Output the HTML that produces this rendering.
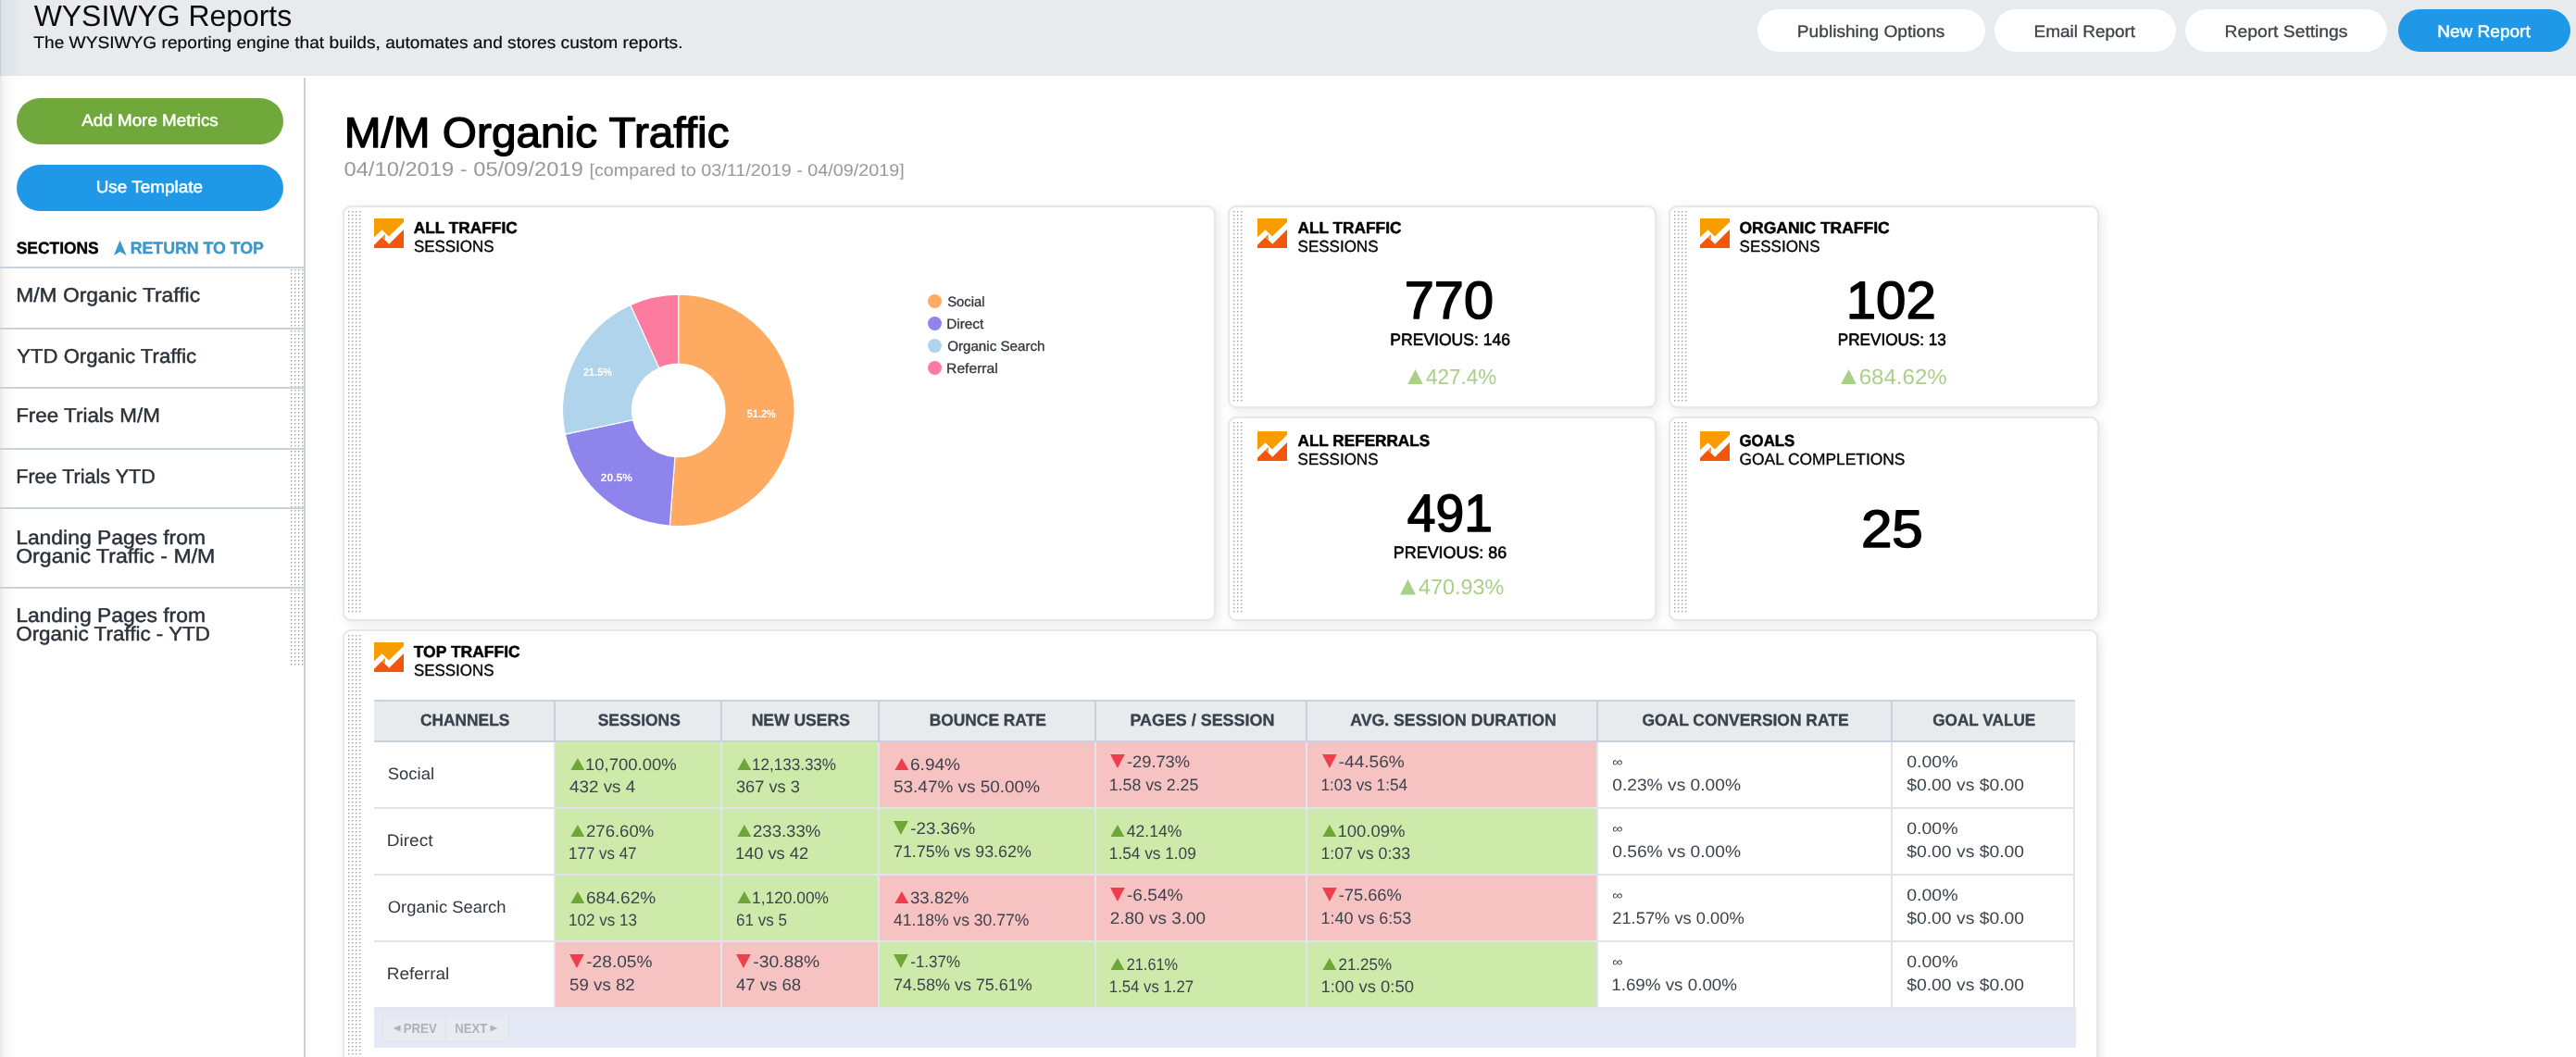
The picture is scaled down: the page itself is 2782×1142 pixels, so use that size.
<!DOCTYPE html>
<html><head><meta charset="utf-8"><title>WYSIWYG Reports</title>
<style>
html,body{margin:0;padding:0;background:#fff;}
body{width:2782px;height:1142px;overflow:hidden;position:relative;font-family:"Liberation Sans",sans-serif;}
#pg{position:absolute;left:0;top:0;width:2782px;height:1142px;overflow:hidden;}
#pg div,#pg svg{position:absolute;box-sizing:border-box;}
#tx{will-change:transform;}
#tx text{font-family:"Liberation Sans",sans-serif;white-space:pre;text-rendering:geometricPrecision;}
.card{background:#fff;border:2px solid #e7e7e8;border-radius:9px;box-shadow:3px 3px 11px rgba(0,0,0,0.09);}
.dots{background-image:radial-gradient(circle at 0.8px 0.8px,#a4a4a4 0.42px,rgba(164,164,164,0) 1.05px);background-size:4px 4px;}
</style></head><body><div id="pg">
<div style="left:0px;top:0px;width:2782px;height:82px;background:#e7ebee;"></div>
<div style="left:0px;top:0px;width:26px;height:82px;background:linear-gradient(90deg,rgba(20,25,30,0.15) 0,rgba(20,25,30,0.14) 1px,rgba(60,90,150,0.06) 1.6px,rgba(60,90,150,0.03) 10px,rgba(60,90,150,0) 26px);"></div>
<div style="left:0px;top:82px;width:16px;height:1060px;background:linear-gradient(90deg,rgba(0,0,0,0.085) 0,rgba(0,0,0,0.03) 5px,rgba(0,0,0,0) 16px);"></div>
<div style="left:1898px;top:10px;width:246px;height:46px;background:#fff;border-radius:23.0px;"></div>
<div style="left:2154px;top:10px;width:196px;height:46px;background:#fff;border-radius:23.0px;"></div>
<div style="left:2360px;top:10px;width:218px;height:46px;background:#fff;border-radius:23.0px;"></div>
<div style="left:2590px;top:10px;width:186px;height:46px;background:#2098e8;border-radius:23.0px;"></div>
<div style="left:328px;top:84px;width:2px;height:1058px;background:#c9d2dc;"></div>
<div style="left:18px;top:106px;width:288px;height:50px;background:#71a83b;border-radius:25.0px;"></div>
<div style="left:18px;top:178px;width:288px;height:50px;background:#2098e8;border-radius:25.0px;"></div>
<svg style="left:120px;top:256px" width="20" height="24" viewBox="0 0 20 24"><polygon points="9.5,3.7 16.6,20.1 9.7,16.1 2.9,20" fill="#3c97ca"/></svg>
<div style="left:0px;top:288px;width:328px;height:2px;background:#c9d2dc;"></div>
<div style="left:0px;top:354px;width:328px;height:2px;background:#c9d2dc;"></div>
<div style="left:0px;top:417.5px;width:328px;height:2px;background:#c9d2dc;"></div>
<div style="left:0px;top:484px;width:328px;height:2px;background:#c9d2dc;"></div>
<div style="left:0px;top:548px;width:328px;height:2px;background:#c9d2dc;"></div>
<div style="left:0px;top:634px;width:328px;height:2px;background:#c9d2dc;"></div>
<div class="dots" style="left:314px;top:291px;width:14px;height:63px;"></div>
<div class="dots" style="left:314px;top:357px;width:14px;height:60.5px;"></div>
<div class="dots" style="left:314px;top:420.5px;width:14px;height:63.5px;"></div>
<div class="dots" style="left:314px;top:487px;width:14px;height:61px;"></div>
<div class="dots" style="left:314px;top:551px;width:14px;height:83px;"></div>
<div class="dots" style="left:314px;top:637px;width:14px;height:84px;"></div>
<div class="card" style="left:370px;top:222px;width:943px;height:449px;"></div>
<div class="dots" style="left:376px;top:228px;width:15px;height:436px;"></div>
<div class="card" style="left:1326px;top:222px;width:463px;height:219px;"></div>
<div class="dots" style="left:1332px;top:228px;width:11px;height:206px;"></div>
<div class="card" style="left:1802px;top:222px;width:465px;height:219px;"></div>
<div class="dots" style="left:1808px;top:228px;width:15px;height:206px;"></div>
<div class="card" style="left:1326px;top:450px;width:463px;height:221px;"></div>
<div class="dots" style="left:1332px;top:456px;width:11px;height:208px;"></div>
<div class="card" style="left:1802px;top:450px;width:465px;height:221px;"></div>
<div class="dots" style="left:1808px;top:456px;width:15px;height:208px;"></div>
<div class="card" style="left:370px;top:680px;width:1896px;height:480px;border-bottom:none;border-bottom-left-radius:0;border-bottom-right-radius:0;"></div>
<div class="dots" style="left:376px;top:686px;width:15px;height:474px;"></div>
<svg style="left:404px;top:236px" width="32" height="32" viewBox="0 0 32 32"><polygon points="0,0 32,0 32,3.9 15.8,19.5 8.6,12.2 0,20.3" fill="#f89c00"/><polygon points="8.7,20.1 11.9,16.9 11.9,23.1" fill="#f59200"/><polygon points="0,28.7 8.6,20.2 16.2,27.7 32,12 32,32 0,32" fill="#f3560d"/></svg>
<svg style="left:1358px;top:236px" width="32" height="32" viewBox="0 0 32 32"><polygon points="0,0 32,0 32,3.9 15.8,19.5 8.6,12.2 0,20.3" fill="#f89c00"/><polygon points="8.7,20.1 11.9,16.9 11.9,23.1" fill="#f59200"/><polygon points="0,28.7 8.6,20.2 16.2,27.7 32,12 32,32 0,32" fill="#f3560d"/></svg>
<svg style="left:1836px;top:236px" width="32" height="32" viewBox="0 0 32 32"><polygon points="0,0 32,0 32,3.9 15.8,19.5 8.6,12.2 0,20.3" fill="#f89c00"/><polygon points="8.7,20.1 11.9,16.9 11.9,23.1" fill="#f59200"/><polygon points="0,28.7 8.6,20.2 16.2,27.7 32,12 32,32 0,32" fill="#f3560d"/></svg>
<svg style="left:1358px;top:466px" width="32" height="32" viewBox="0 0 32 32"><polygon points="0,0 32,0 32,3.9 15.8,19.5 8.6,12.2 0,20.3" fill="#f89c00"/><polygon points="8.7,20.1 11.9,16.9 11.9,23.1" fill="#f59200"/><polygon points="0,28.7 8.6,20.2 16.2,27.7 32,12 32,32 0,32" fill="#f3560d"/></svg>
<svg style="left:1836px;top:466px" width="32" height="32" viewBox="0 0 32 32"><polygon points="0,0 32,0 32,3.9 15.8,19.5 8.6,12.2 0,20.3" fill="#f89c00"/><polygon points="8.7,20.1 11.9,16.9 11.9,23.1" fill="#f59200"/><polygon points="0,28.7 8.6,20.2 16.2,27.7 32,12 32,32 0,32" fill="#f3560d"/></svg>
<svg style="left:404px;top:694px" width="32" height="32" viewBox="0 0 32 32"><polygon points="0,0 32,0 32,3.9 15.8,19.5 8.6,12.2 0,20.3" fill="#f89c00"/><polygon points="8.7,20.1 11.9,16.9 11.9,23.1" fill="#f59200"/><polygon points="0,28.7 8.6,20.2 16.2,27.7 32,12 32,32 0,32" fill="#f3560d"/></svg>
<svg style="left:0;top:0" width="2782" height="700" viewBox="0 0 2782 700"><path d="M732.75,318.30 A125.1,125.1 0 1 1 723.33,568.14 L728.96,493.56 A50.3,50.3 0 1 0 732.75,393.10 Z" fill="#ffaa61" stroke="#fff" stroke-width="1.1" stroke-linejoin="round"/><path d="M723.33,568.14 A125.1,125.1 0 0 1 610.33,469.15 L683.53,453.75 A50.3,50.3 0 0 0 728.96,493.56 Z" fill="#8e84eb" stroke="#fff" stroke-width="1.1" stroke-linejoin="round"/><path d="M610.33,469.15 A125.1,125.1 0 0 1 680.91,329.55 L711.91,397.62 A50.3,50.3 0 0 0 683.53,453.75 Z" fill="#b0d4eb" stroke="#fff" stroke-width="1.1" stroke-linejoin="round"/><path d="M680.91,329.55 A125.1,125.1 0 0 1 732.75,318.30 L732.75,393.10 A50.3,50.3 0 0 0 711.91,397.62 Z" fill="#fd7b9e" stroke="#fff" stroke-width="1.1" stroke-linejoin="round"/><circle cx="1009.5" cy="325.5" r="7.5" fill="#ffaa61"/><circle cx="1009.5" cy="349.5" r="7.5" fill="#8e84eb"/><circle cx="1009.5" cy="373.6" r="7.5" fill="#b0d4eb"/><circle cx="1009.5" cy="397.5" r="7.5" fill="#fd7b9e"/></svg>
<svg style="left:1520px;top:398.7px" width="17" height="16.5" viewBox="0 0 17 16.5"><polygon points="0,16.5 8.5,0 17,16.5" fill="#a9d087"/></svg>
<svg style="left:1988.25px;top:398.7px" width="17" height="16.5" viewBox="0 0 17 16.5"><polygon points="0,16.5 8.5,0 17,16.5" fill="#a9d087"/></svg>
<svg style="left:1512px;top:626.2px" width="17" height="16.5" viewBox="0 0 17 16.5"><polygon points="0,16.5 8.5,0 17,16.5" fill="#a9d087"/></svg>
<div style="left:404px;top:756px;width:1836.5px;height:45.5px;background:#e7ebee;border-top:2px solid #c9d2dc;border-bottom:2.5px solid #c9d2dc;"></div>
<div style="left:598px;top:757px;width:2px;height:44px;background:#c9d2dc;"></div>
<div style="left:778px;top:757px;width:2px;height:44px;background:#c9d2dc;"></div>
<div style="left:948px;top:757px;width:2px;height:44px;background:#c9d2dc;"></div>
<div style="left:1182px;top:757px;width:2px;height:44px;background:#c9d2dc;"></div>
<div style="left:1410px;top:757px;width:2px;height:44px;background:#c9d2dc;"></div>
<div style="left:1724px;top:757px;width:2px;height:44px;background:#c9d2dc;"></div>
<div style="left:2042px;top:757px;width:2px;height:44px;background:#c9d2dc;"></div>
<div style="left:600px;top:802px;width:178px;height:70px;background:#cdeaaa;"></div>
<svg style="left:615.5px;top:818.6px" width="15.8" height="13.8" viewBox="0 0 15.8 13.8"><polygon points="0,13.8 7.9,0 15.8,13.8" fill="#6ea637"/></svg>
<div style="left:780px;top:802px;width:168px;height:70px;background:#cdeaaa;"></div>
<svg style="left:795.5px;top:818.6px" width="15.8" height="13.8" viewBox="0 0 15.8 13.8"><polygon points="0,13.8 7.9,0 15.8,13.8" fill="#6ea637"/></svg>
<div style="left:950px;top:802px;width:232px;height:70px;background:#f6c2c2;"></div>
<svg style="left:965.5px;top:818.6px" width="15.8" height="13.8" viewBox="0 0 15.8 13.8"><polygon points="0,13.8 7.9,0 15.8,13.8" fill="#ee3f4c"/></svg>
<div style="left:1184px;top:802px;width:226px;height:70px;background:#f6c2c2;"></div>
<svg style="left:1199.05px;top:815px" width="15.8" height="15" viewBox="0 0 15.8 15"><polygon points="0,0 15.8,0 7.9,15" fill="#ee3f4c"/></svg>
<div style="left:1412px;top:802px;width:312px;height:70px;background:#f6c2c2;"></div>
<svg style="left:1427.8px;top:815px" width="15.8" height="15" viewBox="0 0 15.8 15"><polygon points="0,0 15.8,0 7.9,15" fill="#ee3f4c"/></svg>
<div style="left:404px;top:872px;width:1836.5px;height:2px;background:#e1e4e8;"></div>
<div style="left:600px;top:874px;width:178px;height:70px;background:#cdeaaa;"></div>
<svg style="left:615.5px;top:890.6px" width="15.8" height="13.8" viewBox="0 0 15.8 13.8"><polygon points="0,13.8 7.9,0 15.8,13.8" fill="#6ea637"/></svg>
<div style="left:780px;top:874px;width:168px;height:70px;background:#cdeaaa;"></div>
<svg style="left:795.5px;top:890.6px" width="15.8" height="13.8" viewBox="0 0 15.8 13.8"><polygon points="0,13.8 7.9,0 15.8,13.8" fill="#6ea637"/></svg>
<div style="left:950px;top:874px;width:232px;height:70px;background:#cdeaaa;"></div>
<svg style="left:965.3px;top:887px" width="15.8" height="15" viewBox="0 0 15.8 15"><polygon points="0,0 15.8,0 7.9,15" fill="#6ea637"/></svg>
<div style="left:1184px;top:874px;width:226px;height:70px;background:#cdeaaa;"></div>
<svg style="left:1199.25px;top:890.6px" width="15.8" height="13.8" viewBox="0 0 15.8 13.8"><polygon points="0,13.8 7.9,0 15.8,13.8" fill="#6ea637"/></svg>
<div style="left:1412px;top:874px;width:312px;height:70px;background:#cdeaaa;"></div>
<svg style="left:1428.0px;top:890.6px" width="15.8" height="13.8" viewBox="0 0 15.8 13.8"><polygon points="0,13.8 7.9,0 15.8,13.8" fill="#6ea637"/></svg>
<div style="left:404px;top:944px;width:1836.5px;height:2px;background:#e1e4e8;"></div>
<div style="left:600px;top:946px;width:178px;height:70px;background:#cdeaaa;"></div>
<svg style="left:615.5px;top:962.6px" width="15.8" height="13.8" viewBox="0 0 15.8 13.8"><polygon points="0,13.8 7.9,0 15.8,13.8" fill="#6ea637"/></svg>
<div style="left:780px;top:946px;width:168px;height:70px;background:#cdeaaa;"></div>
<svg style="left:795.5px;top:962.6px" width="15.8" height="13.8" viewBox="0 0 15.8 13.8"><polygon points="0,13.8 7.9,0 15.8,13.8" fill="#6ea637"/></svg>
<div style="left:950px;top:946px;width:232px;height:70px;background:#f6c2c2;"></div>
<svg style="left:965.5px;top:962.6px" width="15.8" height="13.8" viewBox="0 0 15.8 13.8"><polygon points="0,13.8 7.9,0 15.8,13.8" fill="#ee3f4c"/></svg>
<div style="left:1184px;top:946px;width:226px;height:70px;background:#f6c2c2;"></div>
<svg style="left:1199.05px;top:959px" width="15.8" height="15" viewBox="0 0 15.8 15"><polygon points="0,0 15.8,0 7.9,15" fill="#ee3f4c"/></svg>
<div style="left:1412px;top:946px;width:312px;height:70px;background:#f6c2c2;"></div>
<svg style="left:1427.8px;top:959px" width="15.8" height="15" viewBox="0 0 15.8 15"><polygon points="0,0 15.8,0 7.9,15" fill="#ee3f4c"/></svg>
<div style="left:404px;top:1016px;width:1836.5px;height:2px;background:#e1e4e8;"></div>
<div style="left:600px;top:1018px;width:178px;height:70px;background:#f6c2c2;"></div>
<svg style="left:615.3px;top:1031px" width="15.8" height="15" viewBox="0 0 15.8 15"><polygon points="0,0 15.8,0 7.9,15" fill="#ee3f4c"/></svg>
<div style="left:780px;top:1018px;width:168px;height:70px;background:#f6c2c2;"></div>
<svg style="left:795.3px;top:1031px" width="15.8" height="15" viewBox="0 0 15.8 15"><polygon points="0,0 15.8,0 7.9,15" fill="#ee3f4c"/></svg>
<div style="left:950px;top:1018px;width:232px;height:70px;background:#cdeaaa;"></div>
<svg style="left:965.3px;top:1031px" width="15.8" height="15" viewBox="0 0 15.8 15"><polygon points="0,0 15.8,0 7.9,15" fill="#6ea637"/></svg>
<div style="left:1184px;top:1018px;width:226px;height:70px;background:#cdeaaa;"></div>
<svg style="left:1199.25px;top:1034.6000000000001px" width="15.8" height="13.8" viewBox="0 0 15.8 13.8"><polygon points="0,13.8 7.9,0 15.8,13.8" fill="#6ea637"/></svg>
<div style="left:1412px;top:1018px;width:312px;height:70px;background:#cdeaaa;"></div>
<svg style="left:1428.0px;top:1034.6000000000001px" width="15.8" height="13.8" viewBox="0 0 15.8 13.8"><polygon points="0,13.8 7.9,0 15.8,13.8" fill="#6ea637"/></svg>
<div style="left:598px;top:801.5px;width:2px;height:286.5px;background:#e1e4e8;"></div>
<div style="left:778px;top:801.5px;width:2px;height:286.5px;background:#e1e4e8;"></div>
<div style="left:948px;top:801.5px;width:2px;height:286.5px;background:#e1e4e8;"></div>
<div style="left:1182px;top:801.5px;width:2px;height:286.5px;background:#e1e4e8;"></div>
<div style="left:1410px;top:801.5px;width:2px;height:286.5px;background:#e1e4e8;"></div>
<div style="left:1724px;top:801.5px;width:2px;height:286.5px;background:#e1e4e8;"></div>
<div style="left:2042px;top:801.5px;width:2px;height:286.5px;background:#e1e4e8;"></div>
<div style="left:2238.75px;top:801.5px;width:1.75px;height:286.5px;background:#e1e4e8;"></div>
<div style="left:404px;top:1088px;width:1837.5px;height:44px;background:#e5e9f5;border-top:2px solid #e3e5e9;"></div>
<div style="left:412.5px;top:1096.75px;width:137px;height:28.75px;background:#e8ebf2;border:1px dotted #d6dae2;"></div>
<div style="left:480.5px;top:1097.5px;width:1px;height:27px;border-left:1px dotted #d6dae2;"></div>
<svg style="left:424px;top:1106px" width="9" height="10" viewBox="0 0 9 10"><polygon points="8.5,1.5 8.5,8.5 0.8,5" fill="#b0b1b4"/></svg>
<svg style="left:529px;top:1106px" width="9" height="10" viewBox="0 0 9 10"><polygon points="0.5,1.5 0.5,8.5 8.2,5" fill="#b0b1b4"/></svg>
<svg id="tx" style="left:0;top:0" width="2782" height="1142" viewBox="0 0 2782 1142">
<text transform="translate(36.70 27.80) scale(0.9976 1)" font-size="32" fill="#0b0b0b">WYSIWYG Reports</text>
<text transform="translate(36.30 51.90) scale(1.0635 1)" font-size="18" fill="#0b0b0b" stroke="#0b0b0b" stroke-width="0.2" stroke-linejoin="round">The WYSIWYG reporting engine that builds, automates and stores custom reports.</text>
<text transform="translate(1940.84 40.00) scale(1.0628 1)" font-size="18" fill="#3b4349" stroke="#3b4349" stroke-width="0.3" stroke-linejoin="round">Publishing Options</text>
<text transform="translate(2196.60 40.00) scale(1.0526 1)" font-size="18" fill="#3b4349" stroke="#3b4349" stroke-width="0.3" stroke-linejoin="round">Email Report</text>
<text transform="translate(2402.58 40.00) scale(1.0710 1)" font-size="18" fill="#3b4349" stroke="#3b4349" stroke-width="0.3" stroke-linejoin="round">Report Settings</text>
<text transform="translate(2632.19 40.00) scale(1.0581 1)" font-size="18" fill="#fff" stroke="#fff" stroke-width="0.5" stroke-linejoin="round">New Report</text>
<text transform="translate(88.25 135.75) scale(1.0458 1)" font-size="18" fill="#fff" stroke="#fff" stroke-width="0.5" stroke-linejoin="round">Add More Metrics</text>
<text transform="translate(103.70 208.25) scale(1.0501 1)" font-size="18" fill="#fff" stroke="#fff" stroke-width="0.5" stroke-linejoin="round">Use Template</text>
<text transform="translate(17.70 273.70) scale(0.9673 1)" font-size="18" fill="#000" font-weight="700" stroke="#000" stroke-width="0.4" stroke-linejoin="round">SECTIONS</text>
<text transform="translate(140.72 273.80) scale(0.9752 1)" font-size="18.2" fill="#3c97ca" font-weight="700" stroke="#3c97ca" stroke-width="0.4" stroke-linejoin="round">RETURN TO TOP</text>
<text transform="translate(17.16 326.25) scale(1.0629 1)" font-size="21.5" fill="#2a3138" stroke="#2a3138" stroke-width="0.45" stroke-linejoin="round">M/M Organic Traffic</text>
<text transform="translate(18.23 392.00) scale(1.0293 1)" font-size="21.5" fill="#2a3138" stroke="#2a3138" stroke-width="0.45" stroke-linejoin="round">YTD Organic Traffic</text>
<text transform="translate(17.18 456.25) scale(1.0423 1)" font-size="21.5" fill="#2a3138" stroke="#2a3138" stroke-width="0.45" stroke-linejoin="round">Free Trials M/M</text>
<text transform="translate(17.22 522.00) scale(1.0028 1)" font-size="21.5" fill="#2a3138" stroke="#2a3138" stroke-width="0.45" stroke-linejoin="round">Free Trials YTD</text>
<text transform="translate(17.16 588.00) scale(1.0645 1)" font-size="21.5" fill="#2a3138" stroke="#2a3138" stroke-width="0.45" stroke-linejoin="round">Landing Pages from</text>
<text transform="translate(17.15 608.00) scale(1.0743 1)" font-size="21.5" fill="#2a3138" stroke="#2a3138" stroke-width="0.45" stroke-linejoin="round">Organic Traffic - M/M</text>
<text transform="translate(17.16 672.00) scale(1.0645 1)" font-size="21.5" fill="#2a3138" stroke="#2a3138" stroke-width="0.45" stroke-linejoin="round">Landing Pages from</text>
<text transform="translate(17.18 692.00) scale(1.0433 1)" font-size="21.5" fill="#2a3138" stroke="#2a3138" stroke-width="0.45" stroke-linejoin="round">Organic Traffic - YTD</text>
<text transform="translate(371.74 159.30) scale(1.0383 1)" font-size="46" fill="#000" stroke="#000" stroke-width="1.3" stroke-linejoin="round">M/M Organic Traffic</text>
<text transform="translate(371.50 190.00) scale(1.0978 1)" font-size="21.6" fill="#999">04/10/2019 - 05/09/2019</text>
<text transform="translate(636.43 190.00) scale(1.0747 1)" font-size="18.4" fill="#999">[compared to 03/11/2019 - 04/09/2019]</text>
<text transform="translate(446.75 252.00) scale(0.9814 1)" font-size="17.6" fill="#000" font-weight="700" stroke="#000" stroke-width="0.5" stroke-linejoin="round">ALL TRAFFIC</text>
<text transform="translate(446.88 272.00) scale(0.9679 1)" font-size="17.5" fill="#000" stroke="#000" stroke-width="0.35" stroke-linejoin="round">SESSIONS</text>
<text transform="translate(1401.50 252.00) scale(0.9814 1)" font-size="17.6" fill="#000" font-weight="700" stroke="#000" stroke-width="0.5" stroke-linejoin="round">ALL TRAFFIC</text>
<text transform="translate(1401.62 272.00) scale(0.9707 1)" font-size="17.5" fill="#000" stroke="#000" stroke-width="0.35" stroke-linejoin="round">SESSIONS</text>
<text transform="translate(1878.50 252.00) scale(0.9938 1)" font-size="17.6" fill="#000" font-weight="700" stroke="#000" stroke-width="0.5" stroke-linejoin="round">ORGANIC TRAFFIC</text>
<text transform="translate(1878.62 272.00) scale(0.9707 1)" font-size="17.5" fill="#000" stroke="#000" stroke-width="0.35" stroke-linejoin="round">SESSIONS</text>
<text transform="translate(1401.50 482.00) scale(0.9753 1)" font-size="17.6" fill="#000" font-weight="700" stroke="#000" stroke-width="0.5" stroke-linejoin="round">ALL REFERRALS</text>
<text transform="translate(1401.62 502.00) scale(0.9707 1)" font-size="17.5" fill="#000" stroke="#000" stroke-width="0.35" stroke-linejoin="round">SESSIONS</text>
<text transform="translate(1878.50 482.00) scale(0.9551 1)" font-size="17.6" fill="#000" font-weight="700" stroke="#000" stroke-width="0.5" stroke-linejoin="round">GOALS</text>
<text transform="translate(1878.62 502.00) scale(0.9917 1)" font-size="17.5" fill="#000" stroke="#000" stroke-width="0.35" stroke-linejoin="round">GOAL COMPLETIONS</text>
<text transform="translate(446.75 710.00) scale(0.9933 1)" font-size="17.6" fill="#000" font-weight="700" stroke="#000" stroke-width="0.5" stroke-linejoin="round">TOP TRAFFIC</text>
<text transform="translate(446.88 730.00) scale(0.9679 1)" font-size="17.5" fill="#000" stroke="#000" stroke-width="0.35" stroke-linejoin="round">SESSIONS</text>
<text transform="translate(806.75 451.25) scale(0.9096 1)" font-size="12" fill="#fff" font-weight="700">51.2%</text>
<text transform="translate(630.00 405.50) scale(0.9096 1)" font-size="12" fill="#fff" font-weight="700">21.5%</text>
<text transform="translate(648.75 519.50) scale(1.0042 1)" font-size="12" fill="#fff" font-weight="700">20.5%</text>
<text transform="translate(1023.15 331.00) scale(0.9859 1)" font-size="15" fill="#2f343a" stroke="#2f343a" stroke-width="0.3" stroke-linejoin="round">Social</text>
<text transform="translate(1022.13 355.00) scale(1.0243 1)" font-size="15" fill="#2f343a" stroke="#2f343a" stroke-width="0.3" stroke-linejoin="round">Direct</text>
<text transform="translate(1023.15 379.20) scale(1.0104 1)" font-size="15" fill="#2f343a" stroke="#2f343a" stroke-width="0.3" stroke-linejoin="round">Organic Search</text>
<text transform="translate(1022.11 403.00) scale(1.0420 1)" font-size="15" fill="#2f343a" stroke="#2f343a" stroke-width="0.3" stroke-linejoin="round">Referral</text>
<text transform="translate(1516.73 344.20) scale(1.0120 1)" font-size="57" fill="#000" stroke="#000" stroke-width="1.5" stroke-linejoin="round">770</text>
<text transform="translate(1501.33 373.00) scale(0.9743 1)" font-size="18" fill="#000" stroke="#000" stroke-width="0.6" stroke-linejoin="round">PREVIOUS: 146</text>
<text transform="translate(1540.00 414.90) scale(0.9708 1)" font-size="23.2" fill="#a9d087">427.4%</text>
<text transform="translate(1993.67 344.20) scale(1.0209 1)" font-size="57" fill="#000" stroke="#000" stroke-width="1.5" stroke-linejoin="round">102</text>
<text transform="translate(1984.85 373.00) scale(0.9497 1)" font-size="18" fill="#000" stroke="#000" stroke-width="0.6" stroke-linejoin="round">PREVIOUS: 13</text>
<text transform="translate(2007.71 414.90) scale(1.0370 1)" font-size="23.2" fill="#a9d087">684.62%</text>
<text transform="translate(1519.78 574.20) scale(0.9683 1)" font-size="57" fill="#000" stroke="#000" stroke-width="1.5" stroke-linejoin="round">491</text>
<text transform="translate(1504.81 603.00) scale(0.9948 1)" font-size="18" fill="#000" stroke="#000" stroke-width="0.6" stroke-linejoin="round">PREVIOUS: 86</text>
<text transform="translate(1532.00 642.40) scale(1.0091 1)" font-size="23.2" fill="#a9d087">470.93%</text>
<text transform="translate(2009.89 590.50) scale(1.0553 1)" font-size="57" fill="#000" stroke="#000" stroke-width="1.5" stroke-linejoin="round">25</text>
<text transform="translate(453.93 784.25) scale(0.9640 1)" font-size="18" fill="#3a424c" font-weight="700" stroke="#3a424c" stroke-width="0.35" stroke-linejoin="round">CHANNELS</text>
<text transform="translate(645.67 784.25) scale(0.9688 1)" font-size="18" fill="#3a424c" font-weight="700" stroke="#3a424c" stroke-width="0.35" stroke-linejoin="round">SESSIONS</text>
<text transform="translate(811.70 784.25) scale(0.9736 1)" font-size="18" fill="#3a424c" font-weight="700" stroke="#3a424c" stroke-width="0.35" stroke-linejoin="round">NEW USERS</text>
<text transform="translate(1003.71 784.25) scale(0.9652 1)" font-size="18" fill="#3a424c" font-weight="700" stroke="#3a424c" stroke-width="0.35" stroke-linejoin="round">BOUNCE RATE</text>
<text transform="translate(1220.43 784.25) scale(0.9948 1)" font-size="18" fill="#3a424c" font-weight="700" stroke="#3a424c" stroke-width="0.35" stroke-linejoin="round">PAGES / SESSION</text>
<text transform="translate(1458.17 784.25) scale(0.9836 1)" font-size="18" fill="#3a424c" font-weight="700" stroke="#3a424c" stroke-width="0.35" stroke-linejoin="round">AVG. SESSION DURATION</text>
<text transform="translate(1773.42 784.25) scale(0.9685 1)" font-size="18" fill="#3a424c" font-weight="700" stroke="#3a424c" stroke-width="0.35" stroke-linejoin="round">GOAL CONVERSION RATE</text>
<text transform="translate(2087.18 784.25) scale(0.9549 1)" font-size="18" fill="#3a424c" font-weight="700" stroke="#3a424c" stroke-width="0.35" stroke-linejoin="round">GOAL VALUE</text>
<text transform="translate(418.75 842.00) scale(1.0255 1)" font-size="18" fill="#33393f">Social</text>
<text transform="translate(631.97 832.00) scale(1.0281 1)" font-size="18" fill="#3b444d">10,700.00%</text>
<text transform="translate(615.00 855.75) scale(1.0473 1)" font-size="18" fill="#3b444d">432 vs 4</text>
<text transform="translate(812.05 832.00) scale(0.9466 1)" font-size="18" fill="#3b444d">12,133.33%</text>
<text transform="translate(795.00 855.75) scale(1.0105 1)" font-size="18" fill="#3b444d">367 vs 3</text>
<text transform="translate(983.00 832.00) scale(1.0581 1)" font-size="18" fill="#3b444d">6.94%</text>
<text transform="translate(965.00 855.75) scale(1.0527 1)" font-size="18" fill="#3b444d">53.47% vs 50.00%</text>
<text transform="translate(1217.00 829.25) scale(1.0143 1)" font-size="18" fill="#3b444d">-29.73%</text>
<text transform="translate(1197.77 853.75) scale(0.9840 1)" font-size="18" fill="#3b444d">1.58 vs 2.25</text>
<text transform="translate(1445.75 829.25) scale(1.0591 1)" font-size="18" fill="#3b444d">-44.56%</text>
<text transform="translate(1426.55 853.75) scale(0.9530 1)" font-size="18" fill="#3b444d">1:03 vs 1:54</text>
<text transform="translate(1741.25 827.75) scale(1.1250 1)" font-size="14" fill="#3b444d">∞</text>
<text transform="translate(1741.25 853.75) scale(1.0667 1)" font-size="18" fill="#3b444d">0.23% vs 0.00%</text>
<text transform="translate(2059.25 829.25) scale(1.0826 1)" font-size="18" fill="#3b444d">0.00%</text>
<text transform="translate(2059.25 853.75) scale(1.0734 1)" font-size="18" fill="#3b444d">$0.00 vs $0.00</text>
<text transform="translate(417.69 914.00) scale(1.0597 1)" font-size="18" fill="#33393f">Direct</text>
<text transform="translate(633.00 904.00) scale(1.0309 1)" font-size="18" fill="#3b444d">276.60%</text>
<text transform="translate(614.06 927.75) scale(0.9410 1)" font-size="18" fill="#3b444d">177 vs 47</text>
<text transform="translate(813.00 904.00) scale(1.0309 1)" font-size="18" fill="#3b444d">233.33%</text>
<text transform="translate(793.99 927.75) scale(1.0124 1)" font-size="18" fill="#3b444d">140 vs 42</text>
<text transform="translate(983.25 901.25) scale(1.0442 1)" font-size="18" fill="#3b444d">-23.36%</text>
<text transform="translate(965.00 925.75) scale(0.9910 1)" font-size="18" fill="#3b444d">71.75% vs 93.62%</text>
<text transform="translate(1216.75 904.00) scale(0.9747 1)" font-size="18" fill="#3b444d">42.14%</text>
<text transform="translate(1197.79 927.75) scale(0.9582 1)" font-size="18" fill="#3b444d">1.54 vs 1.09</text>
<text transform="translate(1444.47 904.00) scale(1.0278 1)" font-size="18" fill="#3b444d">100.09%</text>
<text transform="translate(1426.52 927.75) scale(0.9840 1)" font-size="18" fill="#3b444d">1:07 vs 0:33</text>
<text transform="translate(1741.25 899.75) scale(1.1250 1)" font-size="14" fill="#3b444d">∞</text>
<text transform="translate(1741.25 925.75) scale(1.0667 1)" font-size="18" fill="#3b444d">0.56% vs 0.00%</text>
<text transform="translate(2059.25 901.25) scale(1.0826 1)" font-size="18" fill="#3b444d">0.00%</text>
<text transform="translate(2059.25 925.75) scale(1.0734 1)" font-size="18" fill="#3b444d">$0.00 vs $0.00</text>
<text transform="translate(418.75 986.00) scale(1.0218 1)" font-size="18" fill="#33393f">Organic Search</text>
<text transform="translate(633.00 976.00) scale(1.0590 1)" font-size="18" fill="#3b444d">684.62%</text>
<text transform="translate(614.05 999.75) scale(0.9475 1)" font-size="18" fill="#3b444d">102 vs 13</text>
<text transform="translate(812.04 976.00) scale(0.9640 1)" font-size="18" fill="#3b444d">1,120.00%</text>
<text transform="translate(795.00 999.75) scale(0.9479 1)" font-size="18" fill="#3b444d">61 vs 5</text>
<text transform="translate(983.00 976.00) scale(1.0361 1)" font-size="18" fill="#3b444d">33.82%</text>
<text transform="translate(965.00 999.75) scale(0.9744 1)" font-size="18" fill="#3b444d">41.18% vs 30.77%</text>
<text transform="translate(1217.00 973.25) scale(1.0609 1)" font-size="18" fill="#3b444d">-6.54%</text>
<text transform="translate(1198.75 997.75) scale(1.0530 1)" font-size="18" fill="#3b444d">2.80 vs 3.00</text>
<text transform="translate(1445.75 973.25) scale(1.0143 1)" font-size="18" fill="#3b444d">-75.66%</text>
<text transform="translate(1426.50 997.75) scale(0.9968 1)" font-size="18" fill="#3b444d">1:40 vs 6:53</text>
<text transform="translate(1741.25 971.75) scale(1.1250 1)" font-size="14" fill="#3b444d">∞</text>
<text transform="translate(1741.25 997.75) scale(1.0172 1)" font-size="18" fill="#3b444d">21.57% vs 0.00%</text>
<text transform="translate(2059.25 973.25) scale(1.0826 1)" font-size="18" fill="#3b444d">0.00%</text>
<text transform="translate(2059.25 997.75) scale(1.0734 1)" font-size="18" fill="#3b444d">$0.00 vs $0.00</text>
<text transform="translate(417.69 1058.00) scale(1.0561 1)" font-size="18" fill="#33393f">Referral</text>
<text transform="translate(633.25 1045.25) scale(1.0628 1)" font-size="18" fill="#3b444d">-28.05%</text>
<text transform="translate(615.00 1069.75) scale(1.0399 1)" font-size="18" fill="#3b444d">59 vs 82</text>
<text transform="translate(813.25 1045.25) scale(1.0703 1)" font-size="18" fill="#3b444d">-30.88%</text>
<text transform="translate(795.00 1069.75) scale(1.0289 1)" font-size="18" fill="#3b444d">47 vs 68</text>
<text transform="translate(983.25 1045.25) scale(0.9425 1)" font-size="18" fill="#3b444d">-1.37%</text>
<text transform="translate(965.00 1069.75) scale(0.9980 1)" font-size="18" fill="#3b444d">74.58% vs 75.61%</text>
<text transform="translate(1216.75 1048.00) scale(0.9051 1)" font-size="18" fill="#3b444d">21.61%</text>
<text transform="translate(1197.82 1071.75) scale(0.9299 1)" font-size="18" fill="#3b444d">1.54 vs 1.27</text>
<text transform="translate(1445.50 1048.00) scale(0.9419 1)" font-size="18" fill="#3b444d">21.25%</text>
<text transform="translate(1426.47 1071.75) scale(1.0252 1)" font-size="18" fill="#3b444d">1:00 vs 0:50</text>
<text transform="translate(1741.25 1043.75) scale(1.1250 1)" font-size="14" fill="#3b444d">∞</text>
<text transform="translate(1740.21 1069.75) scale(1.0440 1)" font-size="18" fill="#3b444d">1.69% vs 0.00%</text>
<text transform="translate(2059.25 1045.25) scale(1.0826 1)" font-size="18" fill="#3b444d">0.00%</text>
<text transform="translate(2059.25 1069.75) scale(1.0734 1)" font-size="18" fill="#3b444d">$0.00 vs $0.00</text>
<text transform="translate(435.75 1116.25) scale(0.9105 1)" font-size="14.5" fill="#b0b1b4" font-weight="700">PREV</text>
<text transform="translate(491.25 1116.25) scale(0.9017 1)" font-size="14.5" fill="#b0b1b4" font-weight="700">NEXT</text>
</svg>
</div></body></html>
